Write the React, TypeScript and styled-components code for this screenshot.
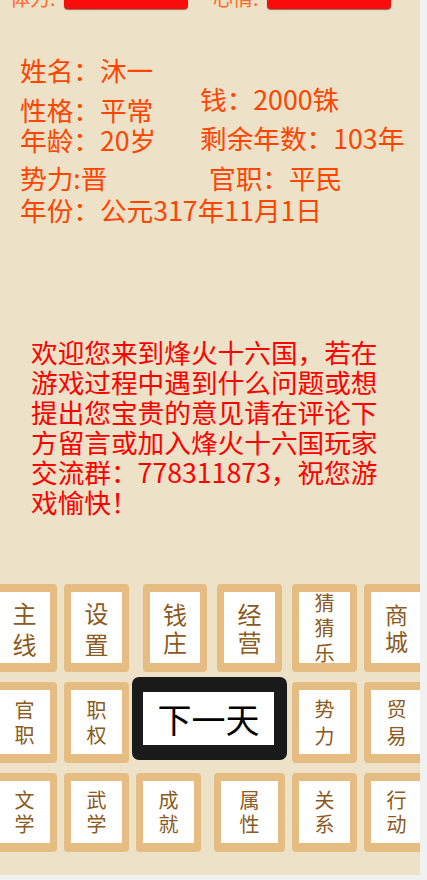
import React from 'react';
import styled, { createGlobalStyle } from 'styled-components';

const GlobalStyle = createGlobalStyle`
  html, body {
    margin: 0;
    padding: 0;
    background: #f1f1f1;
  }
  body {
    font-family: "Noto Sans CJK SC", "Noto Sans", sans-serif;
  }
`;

const Page = styled.div`
  width: 420px;
  height: 875px;
  overflow: hidden;
  background: #ede2c7;
  display: flex;
  flex-direction: column;
`;

const StatusRow = styled.div`
  display: flex;
  align-items: center;
  height: 22px;
  margin-top: -13px;
  padding-left: 10px;
`;

const Stat = styled.div<{ $ml?: number }>`
  display: flex;
  align-items: center;
  margin-left: ${(p) => p.$ml || 0}px;
`;

const StatLabel = styled.span`
  width: 54px;
  font-size: 20px;
  line-height: 22px;
  color: #ff6a2a;
`;

const StatBar = styled.div`
  width: 124px;
  height: 22px;
  background: #f80c0c;
  border-radius: 4px;
  box-shadow: 0 1px 1px rgba(80, 20, 10, 0.6);
`;

const Info = styled.div`
  margin-top: 46px;
  padding-left: 20px;
  color: #ff4500;
  font-size: 26.67px;
  line-height: 30px;
  white-space: nowrap;
`;

const InfoBlock = styled.div`
  display: flex;
`;

const InfoCol = styled.div<{ $w?: number; $mt?: number }>`
  width: ${(p) => (p.$w ? `${p.$w}px` : 'auto')};
  margin-top: ${(p) => p.$mt || 0}px;
  flex-shrink: 0;
`;

const InfoLine = styled.div<{ $mt?: number }>`
  margin-top: ${(p) => p.$mt || 0}px;
`;

const InfoRow = styled.div<{ $mt?: number }>`
  display: flex;
  margin-top: ${(p) => p.$mt || 0}px;
`;

const Welcome = styled.p`
  margin: 112px 0 0;
  padding-left: 31px;
  width: 350px;
  color: #ff0000;
  font-size: 26.67px;
  line-height: 30px;
`;

const Board = styled.div`
  margin-top: 67px;
  margin-left: -8px;
  display: flex;
  flex-direction: column;
  gap: 10px;
`;

const TileRow = styled.div`
  display: flex;
  align-items: flex-start;
`;

const Tile = styled.div<{ $h: number; $ml?: number; $w?: number; $fs: number; $lh: number }>`
  box-sizing: border-box;
  flex-shrink: 0;
  width: ${(p) => p.$w || 65}px;
  height: ${(p) => p.$h}px;
  margin-left: ${(p) => p.$ml || 0}px;
  border-style: solid;
  border-color: #e5bc82;
  border-width: 8px 7px 9px;
  border-radius: 4px;
  background: #ffffff;
  display: flex;
  flex-direction: column;
  align-items: center;
  justify-content: center;
  color: #8a5a22;
  font-size: ${(p) => p.$fs}px;
  line-height: ${(p) => p.$lh}px;
  span {
    display: block;
  }
`;

const NextDay = styled.button`
  box-sizing: border-box;
  flex-shrink: 0;
  width: 155px;
  height: 83px;
  margin: -5px 0 0 3px;
  padding: 0;
  border-style: solid;
  border-color: #1a1a1a;
  border-width: 15px 13px 15px 11px;
  border-radius: 7px;
  background: #ffffff;
  color: #000000;
  font-family: "Noto Sans CJK SC", "Noto Sans", sans-serif;
  font-size: 34px;
  line-height: 1;
  cursor: pointer;
`;

type TileData = { t: string; fs: number; lh: number; ml?: number; w?: number };

const row1: TileData[] = [
  { t: '主线', fs: 24, lh: 31 },
  { t: '设置', fs: 24, lh: 31, ml: 7 },
  { t: '钱庄', fs: 24, lh: 28, ml: 14, w: 64 },
  { t: '经营', fs: 24, lh: 28, ml: 10 },
  { t: '猜猜乐', fs: 20, lh: 25, ml: 10 },
  { t: '商城', fs: 23, lh: 27, ml: 7 },
];

const row2Left: TileData[] = [
  { t: '官职', fs: 20, lh: 25 },
  { t: '职权', fs: 20, lh: 25, ml: 7 },
];

const row2Right: TileData[] = [
  { t: '势力', fs: 20, lh: 27, ml: 5 },
  { t: '贸易', fs: 20, lh: 27, ml: 7 },
];

const row3: TileData[] = [
  { t: '文学', fs: 20, lh: 24 },
  { t: '武学', fs: 20, lh: 24, ml: 7 },
  { t: '成就', fs: 20, lh: 24, ml: 7 },
  { t: '属性', fs: 20, lh: 24, ml: 13, w: 71 },
  { t: '关系', fs: 20, lh: 24, ml: 7 },
  { t: '行动', fs: 20, lh: 24, ml: 7 },
];

const renderTiles = (items: TileData[], h: number) =>
  items.map((item) => (
    <Tile key={item.t} $h={h} $ml={item.ml} $w={item.w} $fs={item.fs} $lh={item.lh}>
      {item.t.split('').map((c, i) => (
        <span key={i}>{c}</span>
      ))}
    </Tile>
  ));

const App = () => {
  return (
    <Page>
      <GlobalStyle />
      <StatusRow>
        <Stat>
          <StatLabel>体力:</StatLabel>
          <StatBar />
        </Stat>
        <Stat $ml={25}>
          <StatLabel>心情:</StatLabel>
          <StatBar />
        </Stat>
      </StatusRow>

      <Info>
        <InfoBlock>
          <InfoCol $w={180}>
            <InfoLine>姓名：沐一</InfoLine>
            <InfoLine $mt={10}>性格：平常</InfoLine>
            <InfoLine>年龄：20岁</InfoLine>
          </InfoCol>
          <InfoCol $mt={29}>
            <InfoLine>钱：2000铢</InfoLine>
            <InfoLine $mt={9}>剩余年数：103年</InfoLine>
          </InfoCol>
        </InfoBlock>
        <InfoRow $mt={8}>
          <InfoCol $w={189}>势力:晋</InfoCol>
          <InfoCol>官职：平民</InfoCol>
        </InfoRow>
        <InfoLine $mt={2}>年份：公元317年11月1日</InfoLine>
      </Info>

      <Welcome>
        欢迎您来到烽火十六国，若在游戏过程中遇到什么问题或想提出您宝贵的意见请在评论下方留言或加入烽火十六国玩家交流群：778311873，祝您游戏愉快！
      </Welcome>

      <Board>
        <TileRow>{renderTiles(row1, 88)}</TileRow>
        <TileRow>
          {renderTiles(row2Left, 81)}
          <NextDay type="button">下一天</NextDay>
          {renderTiles(row2Right, 81)}
        </TileRow>
        <TileRow>{renderTiles(row3, 79)}</TileRow>
      </Board>
    </Page>
  );
};

export default App;
